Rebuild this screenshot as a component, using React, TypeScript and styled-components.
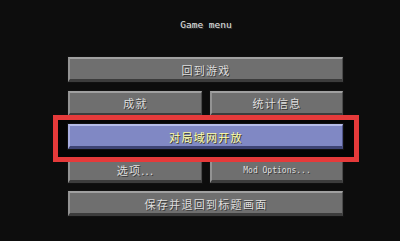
import React from "react";
import styled, { createGlobalStyle } from "styled-components";

const Global = createGlobalStyle`
  html, body { margin: 0; padding: 0; background: #0d0d0d; }
  body { width: 400px; height: 241px; overflow: hidden; }
`;

const Screen = styled.div`
  width: 400px;
  height: 241px;
  background: #0d0d0d;
  padding: 18px 0 0 68px;
  box-sizing: border-box;
  display: flex;
  flex-direction: column;
`;

const Title = styled.div`
  width: 276px;
  text-align: center;
  font-family: "DejaVu Sans Mono", "Liberation Mono", monospace;
  font-size: 9.5px;
  line-height: 14px;
  color: #e6e6e6;
  text-shadow: 1px 1px 0 #3a3a3a;
  margin-bottom: 25px;
`;

const Menu = styled.div`
  width: 275px;
  display: grid;
  grid-template-columns: 134px 133px;
  column-gap: 8px;
  grid-auto-rows: 25px;
  row-gap: 8.5px;
`;

const Button = styled.div<{ $wide?: boolean; $hover?: boolean; $mono?: boolean }>`
  position: relative;
  z-index: 1;
  grid-column: ${(p) => (p.$wide ? "1 / span 2" : "auto")};
  box-sizing: border-box;
  display: flex;
  align-items: center;
  justify-content: center;
  background: ${(p) => (p.$hover ? "#8088c4" : "#6f6f6f")};
  border-top: 2px solid ${(p) => (p.$hover ? "#b6bce8" : "#a0a0a0")};
  border-left: 2px solid ${(p) => (p.$hover ? "#a8aee0" : "#939393")};
  border-bottom: 3px solid ${(p) => (p.$hover ? "#3e4474" : "#3c3c3c")};
  border-right: 1px solid ${(p) => (p.$hover ? "#50568a" : "#4c4c4c")};
  outline: 1px solid #111;
  color: ${(p) => (p.$hover ? "#ffffa8" : "#dedede")};
  text-shadow: 1px 1px 0 ${(p) => (p.$hover ? "#3f3f28" : "#3a3a3a")};
  font-family: ${(p) =>
    p.$mono
      ? `"DejaVu Sans Mono", "Liberation Mono", monospace`
      : `"Noto Sans CJK SC", "Noto Sans", sans-serif`};
  font-size: ${(p) => (p.$mono ? "8px" : "11px")};
  letter-spacing: ${(p) => (p.$mono ? "0" : "1.3px")};
  padding-top: 1px;
  white-space: nowrap;
`;

const Focus = styled.div`
  position: relative;
  z-index: 2;
  grid-column: 1 / span 2;
  display: flex;
  flex-direction: column;
`;

const RedFrame = styled.div`
  position: absolute;
  left: -15px;
  right: -16px;
  top: -9px;
  bottom: -13px;
  background: #050505;
  border: 5px solid #e53a3a;
  box-sizing: border-box;
  z-index: 0;
`;

const FocusButton = styled(Button)`
  height: 25px;
`;

export default function App() {
  return (
    <>
      <Global />
      <Screen>
        <Title>Game menu</Title>
        <Menu>
          <Button $wide>回到游戏</Button>
          <Button>成就</Button>
          <Button>统计信息</Button>
          <Focus>
            <RedFrame />
            <FocusButton $wide $hover>
              对局域网开放
            </FocusButton>
          </Focus>
          <Button>选项...</Button>
          <Button $mono>Mod Options...</Button>
          <Button $wide>保存并退回到标题画面</Button>
        </Menu>
      </Screen>
    </>
  );
}
